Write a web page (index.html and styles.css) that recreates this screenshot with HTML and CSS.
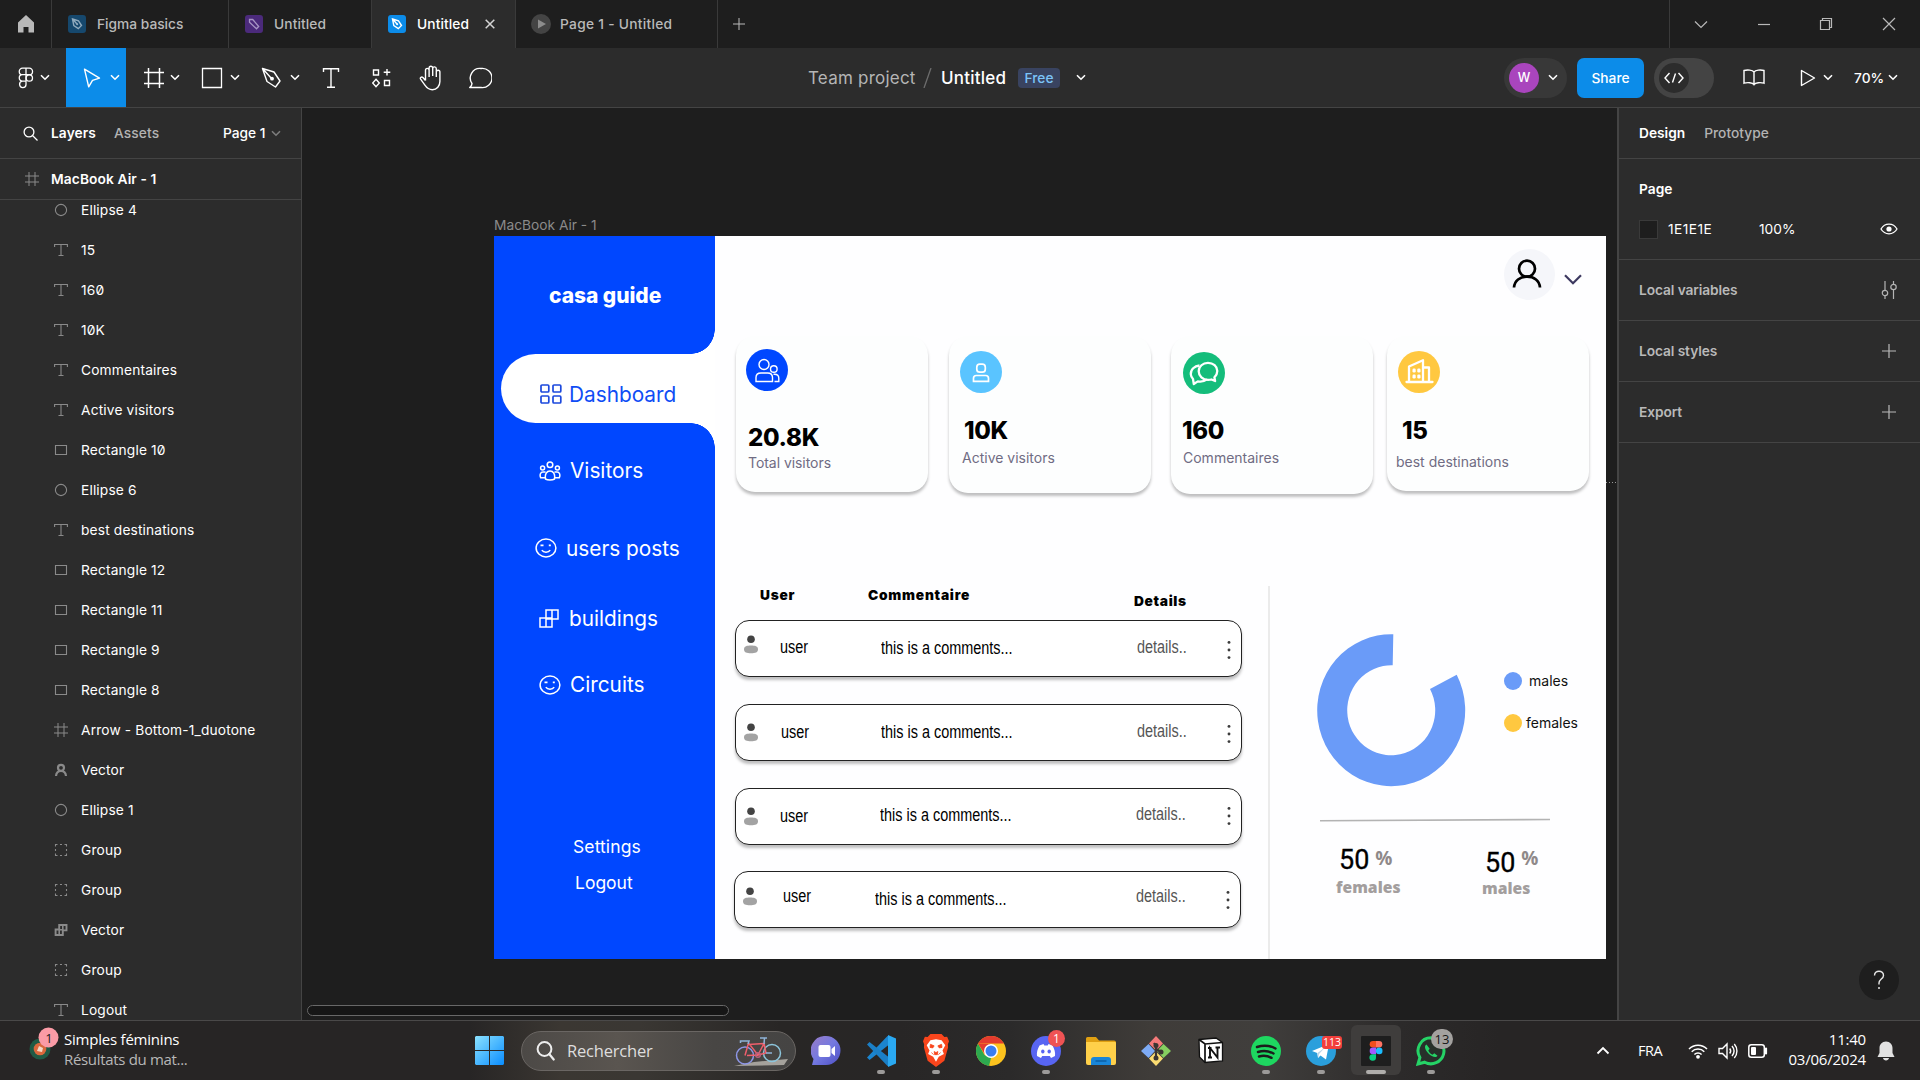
FILE: index.html
```html
<!DOCTYPE html>
<html lang="en">
<head>
<meta charset="utf-8">
<title>Untitled</title>
<link rel="stylesheet" href="styles.css">
</head>
<body>
<svg class="defs" aria-hidden="true">
  <symbol id="chev" viewBox="0 0 10 7"><path d="M1 1.2l4 4 4-4" fill="none" stroke="currentColor" stroke-width="1.6"/></symbol>
  <symbol id="hash" viewBox="0 0 24 24"><path d="M6.500 2v20M17.500 2v20M2 6.500h20M2 17.500h20" fill="none" stroke="currentColor" stroke-width="1.500"/></symbol>
  <symbol id="l-hash" viewBox="0 0 14 14"><path d="M4 0v14M10 0v14M0 4h14M0 10h14" fill="none" stroke="currentColor"/></symbol>
  <symbol id="l-text" viewBox="0 0 14 14"><path d="M.6 4V1.500h12.800V4M7 1.500v11M4.500 12.500h5" fill="none" stroke="currentColor" stroke-width="1.100"/></symbol>
  <symbol id="l-rect" viewBox="0 0 14 14"><path d="M1.500 2.500h11v9h-11z" fill="none" stroke="currentColor" stroke-width="1.100"/></symbol>
  <symbol id="l-oval" viewBox="0 0 14 14"><circle cx="7" cy="7" r="5.600" fill="none" stroke="currentColor" stroke-width="1.100"/></symbol>
  <symbol id="l-group" viewBox="0 0 14 14"><path d="M1.500 3.500v-2h2M6 1.500h2M10.500 1.500h2v2M12.500 6v2M12.500 10.500v2h-2M8 12.500H6M3.500 12.500h-2v-2M1.500 8V6" fill="none" stroke="currentColor" stroke-width="1.100"/></symbol>
  <symbol id="l-person" viewBox="0 0 14 14"><g fill="none" stroke="currentColor" stroke-width="2.200"><circle cx="7" cy="4.800" r="3"/><path d="M2 13c.3-3 2.200-5 5-5s4.700 2 5 5"/></g></symbol>
  <symbol id="l-build" viewBox="0 0 14 14"><path d="M5.200 2h7.300v5.400H8.800V12H1.600V6.500h3.600z" fill="none" stroke="currentColor" stroke-width="1.900"/><path d="M8.800 2v5.400M5.200 6.500V12M5.200 6.800h4" stroke="currentColor" stroke-width="1.600"/></symbol>
  <symbol id="nib" viewBox="0 0 18 18"><path d="M4.500 4l6 1.800 3 4.700-3.200 3.200-4.500-3zM4.500 4l4.700 5.300" fill="none" stroke="currentColor" stroke-width="1.400"/><circle cx="9.200" cy="9.300" r="1" fill="currentColor"/></symbol>
  <symbol id="smile" viewBox="0 0 22 20"><ellipse cx="11" cy="10" rx="9.900" ry="8.900" fill="none" stroke="currentColor" stroke-width="1.500"/><path d="M6.800 12.200c1.800 2.800 6.600 2.800 8.400 0" fill="none" stroke="currentColor" stroke-width="1.500"/><path d="M5.500 7.400h3M13.800 7.400h2" stroke="currentColor" stroke-width="1.600"/></symbol>
  <symbol id="avatar" viewBox="0 0 16 19"><circle cx="8" cy="4.300" r="3.800" fill="#434343"/><path d="M1 14.200C1 11 4 10.400 8 10.400s7 .6 7 3.800c0 3.300-2.600 4-7 4s-7-.7-7-4z" fill="#a3a3a3"/></symbol>
  <symbol id="dots" viewBox="0 0 4 20"><g fill="#3c3c3c"><circle cx="2" cy="2.400" r="1.450"/><circle cx="2" cy="10" r="1.450"/><circle cx="2" cy="17.600" r="1.450"/></g></symbol>
  <symbol id="plus" viewBox="0 0 14 14"><path d="M7 0v14M0 7h14" stroke="currentColor" stroke-width="1.200"/></symbol>
</svg>

<header class="tabbar">
  <div class="tab home"><svg width="16" height="18" viewBox="0 0 16 18"><path d="M8 0l8 7.500V17.500h-5.500V12h-5v5.500H0V7.500z" fill="#b9b9b9"/></svg></div>
  <div class="tab t1"><span class="fileicon blue-dim"><svg width="18" height="18"><use href="#nib"/></svg></span>Figma basics</div>
  <div class="tab t2"><span class="fileicon purple"><svg width="18" height="18" viewBox="0 0 18 18"><path d="M4.500 4.500h3.200l6 7-2.200 2.300-7-6.600z" fill="none" stroke="currentColor" stroke-width="1.300"/></svg></span>Untitled</div>
  <div class="tab t3"><span class="fileicon blue"><svg width="18" height="18"><use href="#nib"/></svg></span>Untitled<svg class="close" width="10" height="10" viewBox="0 0 10 10"><path d="M.7.7l8.600 8.600M9.300.7L.7 9.300" stroke="#d5d5d5" stroke-width="1.500"/></svg></div>
  <div class="tab t4"><svg class="playdot" width="20" height="20" viewBox="0 0 20 20"><circle cx="10" cy="10" r="10" fill="#444"/><path d="M7 5.500l8 4.500-8 4.500z" fill="#8c8c8c"/></svg>Page 1 - Untitled</div>
  <div class="newtab"><svg width="12" height="12"><use href="#plus"/></svg></div>
  <div class="winctl">
    <svg width="14" height="14" viewBox="0 0 14 14"><path d="M1 4.500l6 6 6-6"/></svg>
    <svg width="14" height="14" viewBox="0 0 14 14"><path d="M1 7.500h12"/></svg>
    <svg width="14" height="14" viewBox="0 0 14 14"><path d="M1.500 3.500h9v9h-9zM3.500 3.500v-2h9v9h-2"/></svg>
    <svg width="14" height="14" viewBox="0 0 14 14"><path d="M1 1l12 12M13 1L1 13"/></svg>
  </div>
</header>

<div class="toolbar">
  <div class="tools">
    <div class="tool menu"><svg width="24" height="24" viewBox="0 0 24 24"><g fill="none" stroke="#fff" stroke-width="1.300"><path d="M12 2.200H8.500a3.200 3.200 0 000 6.500H12zM12 2.200h3.300a3.200 3.200 0 010 6.500H12zM12 8.700H8.500a3.200 3.200 0 000 6.500H12zM12 15.200H8.500a3.200 3.200 0 103.500 3.200z"/><circle cx="15.300" cy="12" r="3.200"/></g></svg><svg class="chev" ><use href="#chev"/></svg></div>
    <div class="tool on"><svg width="24" height="24" viewBox="0 0 24 24"><path d="M4.500 3.200l15 9-7 2.100-3.800 6.500z" fill="none" stroke="#fff" stroke-width="1.400" stroke-linejoin="round"/></svg><svg class="chev"><use href="#chev"/></svg></div>
    <div class="tool frame"><svg width="24" height="24"><use href="#hash"/></svg><svg class="chev"><use href="#chev"/></svg></div>
    <div class="tool"><svg width="24" height="24" viewBox="0 0 24 24"><path d="M2.500 2.500h19v19h-19z" fill="none" stroke="#fff" stroke-width="1.300"/></svg><svg class="chev"><use href="#chev"/></svg></div>
    <div class="tool"><svg width="24" height="24" viewBox="0 0 24 24"><path d="M2.500 2.500L14 6l6 9-4.500 6L7 15.500zM2.500 2.500l8.800 9.800" fill="none" stroke="#fff" stroke-width="1.400" stroke-linejoin="round"/><circle cx="12" cy="12.700" r="1.900" fill="#fff"/></svg><svg class="chev"><use href="#chev"/></svg></div>
    <div class="tool single"><svg width="20" height="22" viewBox="0 0 20 22"><path d="M2.500 5V1.800h15V5M10 1.800v18.400M6 20.200h8" fill="none" stroke="#fff" stroke-width="1.400"/></svg></div>
    <div class="tool single comps"><svg width="20" height="20" viewBox="0 0 20 20"><path d="M1.500 2h5v5h-5zM12.500 12.500h5v5h-5zM15 1v6.500M11.700 4.200h6.600M4 11.200l3.300 3.800L4 18.800.7 15z" fill="none" stroke="#fff" stroke-width="1.400"/></svg></div>
    <div class="tool single"><svg width="24" height="26" viewBox="0 0 24 26"><path d="M6.500 15.500V5.200a1.800 1.800 0 013.600 0V12M10.100 11V3a1.800 1.800 0 013.600 0v8M13.700 11V3.700a1.800 1.800 0 013.600 0V12M17.300 12V7a1.800 1.800 0 013.600 0v9.500c0 4.500-3 8.200-7.500 8.200-3.500 0-5.500-1.500-7.500-4.500l-4.300-6c-.9-1.500 1-2.800 2.300-1.700l2.600 3" fill="none" stroke="#fff" stroke-width="1.400" stroke-linejoin="round"/></svg></div>
    <div class="tool single talk"><svg width="24" height="22" viewBox="0 0 24 22"><path d="M13 1.500a9.600 9.600 0 110 19H1.700c1.600-1.200 2.300-2.500 2.300-4A9.600 9.600 0 0113 1.500z" fill="none" stroke="#fff" stroke-width="1.400" stroke-linejoin="round"/></svg></div>
  </div>
  <div class="crumbs"><span class="team">Team project</span><svg width="9" height="20" viewBox="0 0 9 20"><path d="M8 0L1 20" stroke="#6d6d6d" stroke-width="1.300"/></svg><span class="fname">Untitled</span><span class="free">Free</span><svg class="chev"><use href="#chev"/></svg></div>
  <div class="actions">
    <div class="who"><span class="face">W</span><svg class="chev"><use href="#chev"/></svg></div>
    <div class="share">Share</div>
    <div class="devmode"><span class="knob"><svg width="20" height="12" viewBox="0 0 20 12"><path d="M5.500 1L1 6l4.500 5M14.500 1L19 6l-4.500 5M11.500 1.500l-3 9" fill="none" stroke="#fff" stroke-width="1.400"/></svg></span></div>
    <svg class="book" width="22" height="17" viewBox="0 0 22 17"><path d="M11 3C9.500 1 4.500.5 1 1.500v12.700c3.500-1 8.500-.7 10 1.500 1.500-2.200 6.500-2.500 10-1.500V1.500C17.500.5 12.500 1 11 3zM11 3v12.500" fill="none" stroke="#fff" stroke-width="1.400"/></svg>
    <svg class="play" width="16" height="18" viewBox="0 0 16 18"><path d="M1.500 1.500L14.500 9l-13 7.500z" fill="none" stroke="#fff" stroke-width="1.400" stroke-linejoin="round"/></svg>
    <svg class="chev"><use href="#chev"/></svg>
    <span class="pct">70%</span><svg class="chev"><use href="#chev"/></svg>
  </div>
</div>

<div class="workspace">
  <aside class="layers">
    <div class="ltabs"><svg width="15" height="15" viewBox="0 0 15 15"><circle cx="6" cy="6" r="4.900" fill="none" stroke="#fff" stroke-width="1.300"/><path d="M9.500 9.500l5 5" stroke="#fff" stroke-width="1.300"/></svg><b>Layers</b><span class="dim">Assets</span><span class="pagesel">Page 1</span><svg class="chev dimchev"><use href="#chev"/></svg></div>
    <div class="ltop"><svg width="14" height="14"><use href="#l-hash"/></svg><b>MacBook Air - 1</b></div>
    <ul class="llist">
      <li><svg><use href="#l-oval"/></svg>Ellipse 4</li>
      <li><svg><use href="#l-text"/></svg>15</li>
      <li><svg><use href="#l-text"/></svg>160</li>
      <li><svg><use href="#l-text"/></svg>10K</li>
      <li><svg><use href="#l-text"/></svg>Commentaires</li>
      <li><svg><use href="#l-text"/></svg>Active visitors</li>
      <li><svg><use href="#l-rect"/></svg>Rectangle 10</li>
      <li><svg><use href="#l-oval"/></svg>Ellipse 6</li>
      <li><svg><use href="#l-text"/></svg>best destinations</li>
      <li><svg><use href="#l-rect"/></svg>Rectangle 12</li>
      <li><svg><use href="#l-rect"/></svg>Rectangle 11</li>
      <li><svg><use href="#l-rect"/></svg>Rectangle 9</li>
      <li><svg><use href="#l-rect"/></svg>Rectangle 8</li>
      <li><svg><use href="#l-hash"/></svg>Arrow - Bottom-1_duotone</li>
      <li><svg><use href="#l-person"/></svg>Vector</li>
      <li><svg><use href="#l-oval"/></svg>Ellipse 1</li>
      <li><svg><use href="#l-group"/></svg>Group</li>
      <li><svg><use href="#l-group"/></svg>Group</li>
      <li><svg><use href="#l-build"/></svg>Vector</li>
      <li><svg><use href="#l-group"/></svg>Group</li>
      <li><svg><use href="#l-text"/></svg>Logout</li>
    </ul>
  </aside>

  <main class="canvas">
    <div class="framename">MacBook Air - 1</div>
    <div class="artboard">
      <nav class="side">
        <div class="brand">casa guide</div>
        <div class="nav active"><svg width="22" height="20" viewBox="0 0 22 20"><g fill="none" stroke="#1c49dd" stroke-width="1.700"><rect x="1" y="1" width="7.800" height="7" rx="1"/><rect x="13" y="1" width="7.800" height="7" rx="1"/><rect x="1" y="12" width="7.800" height="7" rx="1"/><rect x="13" y="12" width="7.800" height="7" rx="1"/></g></svg>Dashboard</div>
        <div class="nav visitors"><svg width="22" height="20" viewBox="0 0 22 20"><g fill="none" stroke="#fff" stroke-width="1.500"><circle cx="11" cy="3.700" r="2.800"/><circle cx="3.600" cy="7" r="2"/><circle cx="18.400" cy="7" r="2"/><path d="M6.500 18c-.8-5 1.200-8 4.500-8s5.300 3 4.500 8c-2 1.300-7 1.300-9 0zM6 16.800H1.700C.4 13.500 1.500 11 4 11h2.500M16 16.800h4.300c1.300-3.300.2-5.800-2.300-5.800h-2.500"/></g></svg>Visitors</div>
        <div class="nav posts"><svg width="22" height="20"><use href="#smile"/></svg>users posts</div>
        <div class="nav builds"><svg width="20" height="19" viewBox="0 0 20 19"><path d="M7 1h12v9H7zM13 1v9M1 9h12v9H1zM7 9v9" fill="none" stroke="#fff" stroke-width="1.500"/></svg>buildings</div>
        <div class="nav circuits"><svg width="22" height="20"><use href="#smile"/></svg>Circuits</div>
        <div class="sub settings">Settings</div>
        <div class="sub logout">Logout</div>
      </nav>
      <section class="page">
        <div class="userbar">
          <div class="usercircle"><svg width="30" height="30" viewBox="0 0 30 30"><g fill="none" stroke="#000" stroke-width="2.700"><circle cx="15" cy="9.700" r="8"/><path d="M2 28.500C2.500 21.500 8 17.700 15 17.700s12.500 3.800 13 10.800"/></g></svg></div>
          <svg class="down" width="18" height="11" viewBox="0 0 18 11"><path d="M1 1.200l8 8 8-8" fill="none" stroke="#3d3960" stroke-width="2.200"/></svg>
        </div>
        <div class="cards">
          <article class="card c1">
            <svg width="42" height="42" viewBox="0 0 42 42"><circle cx="21" cy="21" r="21" fill="#0047ff"/><g fill="none" stroke="#fff" stroke-width="1.400"><circle cx="18" cy="15.500" r="5"/><circle cx="27.800" cy="20" r="3.300"/><path d="M10 32.500v-4c0-3 2-4.500 5-4.500h6.500c3 0 5 1.500 5 4.500v4zM28.500 32.500h4.300v-3.200c0-2.500-1.500-4-4.300-4h-1"/></g></svg>
            <strong>20.8K</strong><span>Total visitors</span>
          </article>
          <article class="card c2">
            <svg width="42" height="42" viewBox="0 0 42 42"><circle cx="21" cy="21" r="21" fill="#5ac4ff"/><g fill="none" stroke="#fff" stroke-width="1.700"><rect x="16.800" y="13.200" width="8.500" height="8" rx="3"/><path d="M13.500 30.300v-3c0-1.800 1-2.800 2.800-2.800h9.400c1.800 0 2.800 1 2.800 2.800v3z"/></g></svg>
            <strong>10K</strong><span>Active visitors</span>
          </article>
          <article class="card c3">
            <svg width="42" height="42" viewBox="0 0 42 42"><circle cx="21" cy="21" r="21" fill="#14bd7b"/><g fill="none" stroke="#fff" stroke-width="2.300" stroke-linejoin="round"><path d="M25 10.800c5.200 0 9.300 3.600 9.300 8.300 0 2.600-1.200 4.600-2.900 6.200l.7 3.700-3.600-1.500c-1.100.3-2.300.4-3.500.4-5.200 0-9.300-4-9.300-8.700s4.100-8.400 9.300-8.400z"/><path d="M16.500 13.500c-5 .5-9 4-8.700 8.700.1 2 .9 3.500 2.200 4.800l.8 5 4-2.600c3.600.6 6.900-.2 9.200-2"/></g></svg>
            <strong>160</strong><span>Commentaires</span>
          </article>
          <article class="card c4">
            <svg width="42" height="42" viewBox="0 0 42 42"><circle cx="21" cy="21" r="21" fill="#ffc840"/><g fill="none" stroke="#fff" stroke-width="2.300" stroke-linejoin="round" stroke-linecap="round"><path d="M8.500 31h26M11 30.500V15.500L25 9.200v21.300M25 16.500h6v14"/></g><g fill="#fff"><rect x="14.500" y="17.500" width="3.200" height="4" rx="1.200"/><rect x="19.300" y="17.500" width="3.200" height="4" rx="1.200"/><rect x="14.500" y="23.500" width="3.200" height="4" rx="1.200"/><rect x="19.300" y="23.500" width="3.200" height="4" rx="1.200"/></g></svg>
            <strong>15</strong><span>best destinations</span>
          </article>
        </div>
        <div class="lower">
          <div class="table">
            <div class="thead"><span>User</span><span>Commentaire</span><span class="th-details">Details</span></div>
            <div class="row r1"><svg class="av"><use href="#avatar"/></svg><span class="u">user</span><span class="c">this is a comments...</span><span class="d">details..</span><svg class="more"><use href="#dots"/></svg></div>
            <div class="row r2"><svg class="av"><use href="#avatar"/></svg><span class="u">user</span><span class="c">this is a comments...</span><span class="d">details..</span><svg class="more"><use href="#dots"/></svg></div>
            <div class="row r3"><svg class="av"><use href="#avatar"/></svg><span class="u">user</span><span class="c">this is a comments...</span><span class="d">details..</span><svg class="more"><use href="#dots"/></svg></div>
            <div class="row r4"><svg class="av"><use href="#avatar"/></svg><span class="u">user</span><span class="c">this is a comments...</span><span class="d">details..</span><svg class="more"><use href="#dots"/></svg></div>
          </div>
          <div class="chart">
            <div class="plot">
              <svg width="151" height="155" viewBox="0 0 151 155"><path d="M77.300 1.200A74 76 0 10140.700 41.800L114 56A44 45 0 1176.700 32.300z" fill="#6a9bf8"/></svg>
              <div class="legend">
                <div class="key males"><i></i>males</div>
                <div class="key females"><i></i>females</div>
              </div>
            </div>
            <svg class="rule" width="230" height="4" viewBox="0 0 230 4"><path d="M0 2.700L230 1.500" stroke="#b3b3b3" stroke-width="1.600"/></svg>
            <div class="stats">
              <div class="stat s1"><div class="val"><span>50</span><em>%</em></div><div class="cap">females</div></div>
              <div class="stat s2"><div class="val"><span>50</span><em>%</em></div><div class="cap">males</div></div>
            </div>
          </div>
        </div>
      </section>
    </div>
    <div class="hscroll"></div>
    <div class="vdots"></div>
  </main>

  <aside class="props">
    <div class="ptabs"><b>Design</b><span class="dim">Prototype</span></div>
    <div class="pagebox">
      <b>Page</b>
      <div class="fill"><i class="swatch"></i><span class="hex">1E1E1E</span><span>100%</span><svg width="18" height="12" viewBox="0 0 18 12"><path d="M1 6c3.800-6.400 12.200-6.400 16 0-3.800 6.400-12.200 6.400-16 0z" fill="none" stroke="#fff" stroke-width="1.300"/><circle cx="9" cy="6" r="2.600" fill="#fff"/></svg></div>
    </div>
    <div class="prow vars">Local variables<svg width="16" height="18" viewBox="0 0 16 18"><g fill="none" stroke="#b5b5b5" stroke-width="1.200"><path d="M4 0v9M4 15v3M12.500 0v3M12.500 9v9"/><circle cx="4" cy="12" r="2.700"/><circle cx="12.500" cy="6" r="2.700"/></g></svg></div>
    <div class="prow">Local styles<svg width="14" height="14"><use href="#plus"/></svg></div>
    <div class="prow">Export<svg width="14" height="14"><use href="#plus"/></svg></div>
    <div class="help"><svg width="12" height="20" viewBox="0 0 12 20"><path d="M1.500 5.500C1.500 2.700 3.500 1.200 6 1.200s4.500 1.600 4.500 4.200c0 3.400-4.500 4-4.500 7.600v1.500" fill="none" stroke="#e6e6e6" stroke-width="1.400"/><circle cx="6" cy="18" r="1" fill="#e6e6e6"/></svg></div>
  </aside>
</div>

<footer class="taskbar">
  <div class="widget">
    <svg width="30" height="34" viewBox="0 0 30 34"><circle cx="11" cy="22" r="10.500" fill="#1f5a45"/><circle cx="11" cy="22" r="6.300" fill="#d9683c"/><path d="M8 24l2-5 4 2-1 4z" fill="#f3d9c8"/><circle cx="19.500" cy="10.500" r="10" fill="#fb9ba6"/></svg><span class="wnum">1</span>
    <div class="wtext"><span>Simples féminins</span><span class="wsub">Résultats du mat...</span></div>
  </div>
  <svg class="start" width="29" height="29" viewBox="0 0 29 29"><defs><linearGradient id="wg" gradientUnits="userSpaceOnUse" x1="0" y1="0" x2="29" y2="29"><stop offset="0" stop-color="#8be2ff"/><stop offset="1" stop-color="#0a8dff"/></linearGradient></defs><path d="M1 0h13v14H0V1zM15 0h13l1 1v13H15zM0 15h14v14H1l-1-1zM15 15h14v13l-1 1H15z" fill="url(#wg)"/></svg>
  <div class="search"><svg class="mag" width="19" height="20" viewBox="0 0 19 20"><circle cx="8.500" cy="8" r="6.900" fill="none" stroke="#eee" stroke-width="2"/><path d="M13.200 13l4.500 5.500" stroke="#eee" stroke-width="2.200" stroke-linecap="round"/></svg><span>Rechercher</span>
    <svg width="56" height="32" viewBox="0 0 56 32"><path d="M0 31l20-4 34-3-4 6z" fill="#a5a29c"/><g fill="none" stroke-width="1.500"><circle cx="11" cy="20.500" r="8.500" stroke="#8d96e6"/><circle cx="38" cy="18" r="8.500" stroke="#8cc5dc"/><path d="M11 20.500L14.500 8 24 20l6-11.500-15.500 1M24 20l-11 .5M30 8.500l2 9.500-8 2" stroke="#ef5f6c"/><path d="M6.500 8V6H15l-1 3M26 3h7M30.500 3L30 9M32 18h6" stroke="#8fb3d8"/><circle cx="24" cy="20" r="2.300" stroke="#b7627e"/></g></svg></div>
  <div class="apps">
    <div class="app"><svg width="30" height="30" viewBox="0 0 30 30"><defs><linearGradient id="cg" x1="0" y1="0" x2="1" y2="1"><stop offset="0" stop-color="#9a7cc8"/><stop offset=".5" stop-color="#7479e0"/><stop offset="1" stop-color="#4d4fc4"/></linearGradient></defs><path d="M15 0a14.500 14.500 0 110 29H1l1.500-6A14.500 14.500 0 0115 0z" fill="url(#cg)"/><rect x="7.500" y="9" width="12" height="12" rx="2" fill="#fff"/><path d="M20.500 13l3.500-3v10l-3.500-3z" fill="#fff"/></svg></div>
    <div class="app run"><svg width="30" height="32" viewBox="0 0 30 32"><path d="M1 22.500L3.500 25 22.500 10V1L21.500 1z" fill="#1b85d0"/><path d="M1 9.500L3.500 7 22.500 22v9h-1z" fill="#1b7fc6"/><path d="M22 0l8 3.500v25L22 32z" fill="#2aa9f2"/></svg></div>
    <div class="app run"><svg width="26" height="33" viewBox="0 0 28 32" preserveAspectRatio="none"><path d="M8 0h12l3 3 3-.3L28 7l-1.200 3L27 13l-4 13-9 6-9-6L1 13l.2-3L0 7l2-4.300L5 3z" fill="#f9451c"/><path d="M14 5l6 1 4 5-3 5 1.500 3.500L17 22l-3 5-3-5-5.500-2.500L7 16l-3-5 4-5z" fill="#fff"/><path d="M8 10l4 1.500-1.500 2L7.500 13zM20 10l-4 1.500 1.500 2 3-.5zM12 17l2 1 2-1-.5 3h-3zM9 18l2.500 2M19 18l-2.500 2" fill="#f9451c" stroke="#f9451c" stroke-width=".8"/></svg></div>
    <div class="app"><svg width="30" height="30" viewBox="0 0 30 30"><circle cx="15" cy="15" r="15" fill="#fcc31e"/><path d="M2 7.500A15 15 0 0128 7.500H15z" fill="#e33b2e"/><path d="M2 7.500L8.500 19 15 22l-2 7.900A15 15 0 012 7.500z" fill="#2da94f"/><path d="M2 7.500L9 18.500 15 8z" fill="#e33b2e"/><circle cx="15" cy="15" r="7" fill="#fff"/><circle cx="15" cy="15" r="5.500" fill="#3a7df0"/></svg></div>
    <div class="app run"><svg width="30" height="30" viewBox="0 0 30 30"><circle cx="15" cy="15" r="15" fill="#5865f2"/><path d="M8.500 9.500l4-1.500.8 1.500h3.400l.8-1.500 4 1.500c2 3.500 3 7 2.500 10.500l-4 2-1.200-2h-7.600L10 22l-4-2c-.5-3.500.5-7 2.500-10.500z" fill="#fff"/><ellipse cx="11.800" cy="15.500" rx="1.700" ry="2" fill="#5865f2"/><ellipse cx="18.200" cy="15.500" rx="1.700" ry="2" fill="#5865f2"/></svg><span class="badge red">1</span></div>
    <div class="app"><svg width="32" height="28" viewBox="0 0 32 28"><path d="M1 1.500Q1 0 2.500 0H11l3 3.500h15q2 0 2 2V14H1z" fill="#e0a012"/><path d="M1 5h29q1 0 1 1v20q0 2-2 2H3q-2 0-2-2z" fill="#ffd04a"/><path d="M6 28v-5q0-3 3-3h14q3 0 3 3v5z" fill="#1a86d8"/><path d="M10.500 24h11" stroke="#0b5ea5" stroke-width="1.500"/></svg></div>
    <div class="app"><svg width="30" height="30" viewBox="0 0 30 30"><path d="M15 0l7 7.500-7 7-7-7z" fill="#f47a7a"/><path d="M0 15l7.500-7L14 15l-6.500 7z" fill="#7eabf5"/><path d="M30 15l-7.500-7L16 15l6.500 7z" fill="#86cf60"/><path d="M15 30l7-7.500-7-7-7 7z" fill="#fbdc72"/><path d="M13 7l2 3v13M15 13l5 3" stroke="#3b3532" stroke-width="2.200" fill="none"/><g fill="#3b3532"><circle cx="15" cy="9.500" r="2.500"/><circle cx="15" cy="22" r="2.500"/><circle cx="20" cy="16" r="2.500"/></g></svg></div>
    <div class="app"><svg width="26" height="27" viewBox="0 0 26 27"><path d="M1 2.500L18 1l6.500 4.500V24L7 25.500 1.500 20z" fill="#fff" stroke="#111" stroke-width="1.300"/><path d="M1 2.500L7 7l17.500-1.500M7 7v18.500" fill="none" stroke="#111" stroke-width="1.700"/><path d="M12 20.500V11l7.500 9.500V10.500M10 11h3.500M17.500 10.500H22M10 20.500h4" fill="none" stroke="#111" stroke-width="1.900"/></svg></div>
    <div class="app run"><svg width="30" height="30" viewBox="0 0 30 30"><circle cx="15" cy="15" r="15" fill="#1ed760"/><path d="M6 11c6-2 13-1.500 18.500 1.500M7 16c5.500-1.500 11-1 15.500 1.500M8 20.500c4.500-1.200 8.500-.8 12.500 1.300" fill="none" stroke="#1c1c1c" stroke-width="2.500" stroke-linecap="round"/></svg></div>
    <div class="app run"><svg width="30" height="30" viewBox="0 0 30 30"><circle cx="15" cy="15" r="15" fill="#2a9fdc"/><path d="M6 15l17-7-3 15.500-5.500-4-2.500 2.500-.8-5z" fill="#fff"/><path d="M11.500 17l8-6-6.500 7-.8 4z" fill="#b9d5e8"/></svg><span class="badge square">113</span></div>
    <div class="app current"><svg width="30" height="30" viewBox="0 0 30 30"><rect width="30" height="30" rx="1" fill="#1e1e1e"/><path d="M15 5h-3a3.200 3.200 0 000 6.600h3z" fill="#f24e1e"/><path d="M15 5h3a3.200 3.200 0 010 6.600h-3z" fill="#ff7262"/><path d="M15 11.600h-3a3.200 3.200 0 000 6.600h3z" fill="#a259ff"/><circle cx="18.200" cy="14.900" r="3.300" fill="#1abcfe"/><path d="M15 18.200h-3a3.300 3.300 0 103 3.300z" fill="#0acf83"/></svg></div>
    <div class="app run"><svg width="30" height="30" viewBox="0 0 30 30"><path d="M15 1.800a13 13 0 11-6.300 24.400L2 28l1.900-6.500A13 13 0 0115 1.800z" fill="#27302a" stroke="#25d366" stroke-width="3"/><path d="M10.500 8.500c-3 1.500-1 6 2 9s7.500 5 9 2.200l-3.200-2.500-1.800 1.500c-2-.8-3.500-2.500-4.200-4.200l1.400-1.700z" fill="#25d366"/></svg><span class="badge grey">13</span></div>
  </div>
  <div class="tray">
    <svg class="up" width="14" height="9" viewBox="0 0 14 9"><path d="M1.500 7.500L7 2l5.500 5.500" fill="none" stroke="#fff" stroke-width="1.800"/></svg>
    <span class="lang">FRA</span>
    <svg width="20" height="16" viewBox="0 0 20 16"><g fill="none" stroke="#fff" stroke-width="1.500"><path d="M1 6a12.500 12.500 0 0118 0M3.700 8.800a8.700 8.700 0 0112.600 0M6.400 11.500a5 5 0 017.200 0"/></g><circle cx="10" cy="13.800" r="1.900" fill="#fff"/></svg>
    <svg width="20" height="18" viewBox="0 0 20 18"><g fill="none" stroke="#fff" stroke-width="1.400"><path d="M1 6.500h3.500L9 2v14l-4.500-4.500H1zM11.700 6.500c1.200 1.500 1.200 3.500 0 5M14 4c2.500 3 2.500 7 0 10M16.300 2c3.500 4 3.500 10 0 14"/></g></svg>
    <svg width="20" height="14" viewBox="0 0 20 14"><rect x=".8" y=".8" width="15.500" height="12.400" rx="2.500" fill="none" stroke="#fff" stroke-width="1.500"/><rect x="3" y="3" width="5" height="8" rx="1" fill="#fff"/><path d="M18 4.500v5" stroke="#fff" stroke-width="2.200" stroke-linecap="round"/></svg>
    <div class="clock"><span>11:40</span><span>03/06/2024</span></div>
    <svg width="18" height="20" viewBox="0 0 18 20"><path d="M9 .5c4 0 6.500 3 6.500 6.500v5l2 4H.5l2-4V7C2.500 3.500 5 .5 9 .5zM6 17h6c-.3 3.300-5.700 3.300-6 0z" fill="#e2e2e2"/></svg>
  </div>
</footer>
</body>
</html>
```
FILE: styles.css
```css
* { box-sizing: border-box; }
body {
  margin: 0; width: 1920px; height: 1080px; overflow: hidden;
  display: flex; flex-direction: column;
  background: #1e1e1e; color: #fff;
  font: 500 13.75px/20px Inter, sans-serif;
}
svg { flex: none; display: block; }
b { font-weight: 600; }
.defs { width: 0; height: 0; position: absolute; }
.chev { width: 10px; height: 7px; color: #fff; }
.dim { color: #b3b3b3; }

/* window tabs */
.tabbar { display: flex; height: 48px; flex: none; background: #1e1e1e; color: #b9b9b9; }
.tab { display: flex; align-items: center; border-right: 1px solid #3a3a3a; }
.home { width: 52px; padding-left: 18px; }
.t1 { width: 177px; padding-left: 16px; }
.t2 { width: 143px; padding-left: 16px; letter-spacing: .1px; }
.t3 { width: 144px; padding-left: 16px; background: #2c2c2c; color: #fff; letter-spacing: .1px; }
.t4 { width: 202px; padding-left: 15px; letter-spacing: .28px; }
.fileicon { width: 18px; height: 18px; border-radius: 3px; margin-right: 11px; }
.blue-dim { background: #16486d; color: #8fa9bc; }
.purple { background: #4b2a7b; color: #a795c4; }
.blue { background: #0c8ce9; color: #fff; }
.playdot { margin-right: 9px; }
.close { margin-left: 16px; }
.newtab { display: flex; align-items: center; width: 44px; padding-left: 15px; color: #b9b9b9; }
.winctl { display: flex; align-items: center; gap: 48.700px; margin-left: auto; width: 251px; height: 48px; border-left: 1px solid #3a3a3a; padding-left: 24px; }
.winctl path { fill: none; stroke: #b9b9b9; stroke-width: 1.200; }

/* toolbar */
.toolbar { display: flex; height: 60px; flex: none; background: #2c2c2c; border-bottom: 1px solid #444; }
.tools { display: flex; width: 808px; flex: none; }
.tool { display: flex; align-items: center; width: 60px; padding-left: 14px; gap: 6px; }
.tool.menu { width: 66px; gap: 2px; }
.tool.on { background: #0c8ce9; }
.tool.frame { padding-left: 16px; gap: 4px; }
.tool.single { width: 50px; padding: 0; justify-content: center; }
.tool.comps { padding-left: 2px; }
.tool.talk { padding-right: 2px; }
.crumbs { display: flex; align-items: center; width: 696px; font-size: 17px; font-weight: 400; letter-spacing: .22px; white-space: nowrap; }
.team { width: 115px; color: #b5b5b5; }
.fname { margin-left: 9px; width: 77px; font-weight: 500; }
.free { width: 42px; height: 20px; border-radius: 4px; background: #394360; color: #7cc4f8; font-size: 13.750px; font-weight: 500; letter-spacing: 0; text-align: center; margin-right: 16px; }
.actions { display: flex; align-items: center; }
.who { display: flex; align-items: center; width: 63px; height: 40px; border-radius: 20px; background: #383838; padding-left: 5px; gap: 9px; }
.face { width: 30px; height: 30px; border-radius: 50%; background: #a945bd; line-height: 30px; text-align: center; font-size: 12.500px; }
.share { margin-left: 10px; width: 67px; height: 40px; border-radius: 7px; background: #0c8ce9; line-height: 40px; text-align: center; }
.devmode { margin-left: 10px; width: 60px; height: 40px; border-radius: 20px; background: #444; padding: 5px; }
.knob { display: flex; width: 30px; height: 30px; border-radius: 50%; background: #2c2c2c; align-items: center; justify-content: center; }
.book { margin-left: 29px; }
.play { margin: 0 7px 0 35px; }
.pct { margin: 0 5px 0 21px; width: 29px; }

.workspace { display: flex; height: 912px; flex: none; }

/* layers panel */
.layers { display: flex; flex-direction: column; width: 302px; flex: none; background: #2c2c2c; border-right: 1px solid #444; letter-spacing: .1px; }
.ltabs { display: flex; align-items: center; height: 51px; flex: none; border-bottom: 1px solid #444; padding-left: 23px; }
.ltabs b { margin-left: 13px; width: 63px; }
.pagesel { margin-left: auto; width: 48px; letter-spacing: 0; }
.dimchev { color: #7d7d7d; margin-right: 20px; }
.ltop { display: flex; align-items: center; height: 41px; flex: none; border-bottom: 1px solid #444; padding-left: 25px; gap: 12px; }
.ltop svg, .llist svg { color: #8a8a8a; width: 14px; height: 14px; }
.llist { list-style: none; margin: 0; padding: 0; overflow: hidden; flex: 1; letter-spacing: .15px; }
.llist li { display: flex; align-items: center; gap: 13px; height: 40px; padding-left: 54px; font-weight: 400; font-feature-settings: "zero"; }
.llist li:first-child { margin-top: -10px; }

/* canvas */
.canvas { position: relative; width: 1315px; flex: none; background: #1e1e1e; padding-left: 192px; overflow: hidden; }
.framename { padding-top: 107px; height: 128px; color: #8a8a8a; font-weight: 400; }
.artboard { display: flex; width: 1112px; height: 723px; background: #fefeff; color: #000; }
.hscroll { margin: 46px 0 0 -187px; width: 422px; height: 11px; border: 1px solid #686868; border-radius: 6px; background: #161616; }
.vdots { position: absolute; right: 1px; top: 374px; width: 10px; height: 1px; background: repeating-linear-gradient(90deg, #999 0 1px, transparent 1px 3px); }

.side { width: 221px; flex: none; background: #0047ff; color: #fff; font-size: 21px; }
.brand { height: 118px; padding: 50px 0 0 55px; font-size: 21px; font-weight: 800; letter-spacing: -.05px; }
.nav { display: flex; align-items: center; height: 40px; font-size: 20.800px; font-weight: 400; }
.nav.active { position: relative; height: 69px; margin-left: 7px; padding: 12px 0 0 39px; gap: 7px; background: #fff; border-radius: 34.500px 0 0 34.500px; color: #0f4df5; }
.nav.active svg, .posts svg, .builds svg { margin-bottom: 2px; }
.nav.active::before, .nav.active::after { content: ""; position: absolute; right: 0; width: 24px; height: 25px; }
.nav.active::before { top: -25px; background: radial-gradient(ellipse 24px 25px at 0 0, #0047ff 98%, #fff 100%); }
.nav.active::after { bottom: -25px; background: radial-gradient(ellipse 24px 25px at 0 100%, #0047ff 98%, #fff 100%); }
.visitors { margin-top: 28px; padding-left: 45px; gap: 9px; }
.posts { margin-top: 38px; padding-left: 41px; gap: 9px; }
.builds { margin-top: 30px; padding-left: 45px; gap: 10px; }
.circuits { margin-top: 26px; padding-left: 45px; gap: 9px; }
.sub { height: 36px; line-height: 36px; font-size: 17.500px; font-weight: 400; }
.settings { margin-top: 124px; padding-left: 79px; letter-spacing: .1px; }
.logout { padding-left: 81px; }

.page { width: 891px; }
.userbar { display: flex; justify-content: flex-end; gap: 9px; height: 100px; padding: 13px 24px 0 0; }
.usercircle { width: 51px; height: 51px; border-radius: 50%; background: #f5f6fa; padding: 10px 0 0 7.500px; }
.down { margin-top: 25px; }
.cards { display: flex; height: 160px; padding-left: 21px; }
.card { display: flex; flex-direction: column; height: 156px; border-radius: 19px; background: #fdfefe; box-shadow: 0 3px 3px rgba(0, 0, 0, .25); }
.card strong { font-weight: 800; font-size: 24px; line-height: 24px; letter-spacing: -.3px; }
.card span { font-weight: 400; font-size: 14px; line-height: 16px; color: #706c83; }
.c1 { width: 192px; padding: 13px 0 0 10px; }
.c1 strong { margin: 35px 0 5px 2px; }
.c1 span { margin-left: 2px; letter-spacing: -.05px; }
.c2 { width: 202px; height: 157px; margin-left: 21px; padding: 15px 0 0 11px; }
.c2 strong { margin: 26px 0 7px 4px; }
.c2 span { margin-left: 2px; }
.c3 { width: 202px; height: 158px; margin-left: 20px; padding: 16px 0 0 12px; }
.c3 strong { margin: 25px 0 7px -1px; }
.c4 { width: 202px; height: 155px; margin-left: 14px; padding: 15px 0 0 11px; }
.c4 strong { margin: 26px 0 11px 4px; }
.c4 span { margin-left: -2px; }

.lower { display: flex; margin-top: 90px; height: 373px; }
.table { width: 553px; }
.thead { display: grid; grid-template-columns: 108px 266px auto; align-items: start; padding: 1px 0 0 45px; height: 34px; font: 900 13.750px/17px Inter, sans-serif; letter-spacing: .75px; }
.th-details { margin-top: 6px; letter-spacing: .65px; }
.row { display: grid; grid-template-columns: 37px 101px 256px 84px auto; align-items: start; width: 507px; height: 57px; margin: 0 0 27px 20px; padding-left: 7px; border: 1px solid #222; border-radius: 14px; background: #fff; box-shadow: 0 3px 3px rgba(0, 0, 0, .25); font: 17.500px/20px "Liberation Sans Narrow", "Liberation Sans", sans-serif; }
.row span { transform: scaleX(.825); transform-origin: 0 0; white-space: nowrap; }
.row .av { width: 16px; height: 19px; margin-top: var(--a); }
.row .u { margin-top: var(--u); }
.row .c { margin-top: var(--c); }
.row .d { margin-top: var(--d); color: #555; }
.row .more { width: 4px; height: 20px; margin: var(--m) 0 0 6px; }
.r1 { --a: 14px; --u: 15.500px; --c: 17px; --d: 15.500px; --m: 19px; }
.r2 { --a: 18px; --u: 17px; --c: 17px; --d: 15.500px; --m: 18.500px; }
.r2 .u { margin-left: 1px; }
.r3 { --a: 18px; --u: 17px; --c: 15.500px; --d: 14.500px; --m: 17px; margin-bottom: 26px; }
.r3 .c, .r3 .d { margin-left: -1.500px; }
.r4 { --a: 15px; --u: 14px; --c: 17px; --d: 14px; --m: 17.500px; margin-left: 19px; }
.r4 .u { margin-left: 4px; }
.r4 .c { margin-left: -5px; }

.chart { width: 338px; border-left: 2px solid #ebebeb; }
.plot { display: flex; padding: 47px 0 0 46px; }
.legend { margin: 39px 0 0 37px; font-weight: 400; color: #111; font-size: 14px; }
.key { display: flex; align-items: center; gap: 7px; height: 18px; margin-bottom: 24px; }
.key i { width: 18px; height: 18px; border-radius: 50%; background: #6a9bf8; }
.key.females { gap: 4px; }
.key.females i { background: #ffc840; }
.rule { margin: 30px 0 0 50px; }
.stats { display: flex; padding-left: 66px; }
.stat { flex: none; }
.s1 { width: 146px; padding-top: 23px; }
.s2 { padding-top: 26px; }
.val { display: flex; gap: 6px; padding-left: 3px; height: 30px; font: 400 27px/30px Roboto, sans-serif; -webkit-text-stroke: .3px #000; }
.val em { font: 700 19px/26px "Open Sans", sans-serif; color: #8f8989; -webkit-text-stroke: 0; }
.s2 em { line-height: 20px; }
.cap { font: 800 15.700px/20px "Open Sans", sans-serif; color: #a39e9e; margin-top: 2px; }
.s2 .cap { margin-top: 0; }

/* properties panel */
.props { position: relative; flex: 1; background: #2c2c2c; border-left: 2px solid #444; }
.ptabs { display: flex; gap: 19px; align-items: center; height: 51px; border-bottom: 1px solid #444; padding-left: 20px; }
.pagebox { height: 101px; border-bottom: 1px solid #444; padding: 20px 0 0 20px; }
.fill { display: flex; align-items: center; height: 20px; margin-top: 20px; font-weight: 400; }
.swatch { width: 19px; height: 19px; background: #1e1e1e; border: 1px solid #3a3a3a; margin-right: 10px; }
.hex { width: 91px; letter-spacing: .45px; }
.fill svg { margin-left: auto; margin-right: 22px; }
.prow { display: flex; justify-content: space-between; align-items: center; height: 61px; border-bottom: 1px solid #444; padding: 0 24px 0 20px; color: #b9b9b9; font-weight: 600; letter-spacing: -.1px; }
.prow.vars { padding-right: 23px; }
.help { position: absolute; right: 21px; bottom: 20px; width: 40px; height: 40px; border-radius: 50%; background: #1e1e1e; display: flex; align-items: center; justify-content: center; }

/* taskbar */
.taskbar { display: flex; align-items: center; height: 60px; border-top: 1px solid #4a4949; flex: none;
  background: linear-gradient(90deg, #272525 0, #272525 470px, #3b3732 560px, #3a3733 640px, #282625 780px, #282626 900px, #2b2a2a 1010px, #3f3c39 1150px, #403e3c 1260px, #2c2a2a 1400px, #272525 1500px);
  font: 400 15px/20px "Open Sans", "Noto Sans", sans-serif; }
.widget { display: flex; width: 475px; height: 59px; padding-left: 29px; position: relative; }
.widget svg { margin-top: 6px; }
.wnum { position: absolute; left: 43px; top: 7px; width: 12px; text-align: center; color: #1d1d1d; font-size: 13px; }
.wtext { display: flex; flex-direction: column; padding: 8px 0 0 5px; letter-spacing: -.22px; }
.wsub { color: #b8b8b8; letter-spacing: -.32px; }
.search { display: flex; align-items: center; margin-left: 17px; width: 275px; height: 40px; border-radius: 20px; border: 1px solid #6a6663; background: linear-gradient(90deg, #4c4946, #5a5550 35%, #484644 70%, #454443); padding-left: 14px; color: #dedede; font-size: 16.500px; }
.search span { margin-left: 12px; width: 167px; letter-spacing: -.2px; }
.apps { display: flex; margin-left: 2px; }
.app { position: relative; display: flex; align-items: center; justify-content: center; width: 55px; height: 59px; }
.run::after, .current::after { content: ""; position: absolute; bottom: 6px; left: 24px; width: 8px; height: 4px; border-radius: 2px; background: #9c9a99; }
.current::after { left: 18px; width: 20px; background: #b0aeac; }
.current::before { content: ""; position: absolute; left: 3px; top: 4px; width: 50px; height: 50px; border-radius: 6px; background: #3f3d3c; }
.current svg { position: relative; }
.badge { position: absolute; left: 30px; top: 9px; width: 17px; height: 17px; border-radius: 9px; font-size: 12px; line-height: 17px; text-align: center; }
.red { background: #ef5354; }
.square { left: 29px; top: 15px; width: 20px; height: 13px; border-radius: 3px; background: #f23f3c; font-size: 10.500px; line-height: 13px; }
.grey { left: 28px; top: 8px; width: 22px; height: 20px; border-radius: 10px; background: #a3a19f; color: #151515; font-size: 13px; line-height: 20px; }
.tray { display: flex; align-items: center; margin-left: auto; width: 324px; }
.up { margin-right: 28px; }
.lang { width: 50px; font-size: 14.500px; letter-spacing: -.5px; }
.tray svg + svg { margin-left: 10px; }
.clock { display: flex; flex-direction: column; text-align: right; width: 98px; margin-right: 11px; padding-bottom: 3px; letter-spacing: -.2px; }
```
